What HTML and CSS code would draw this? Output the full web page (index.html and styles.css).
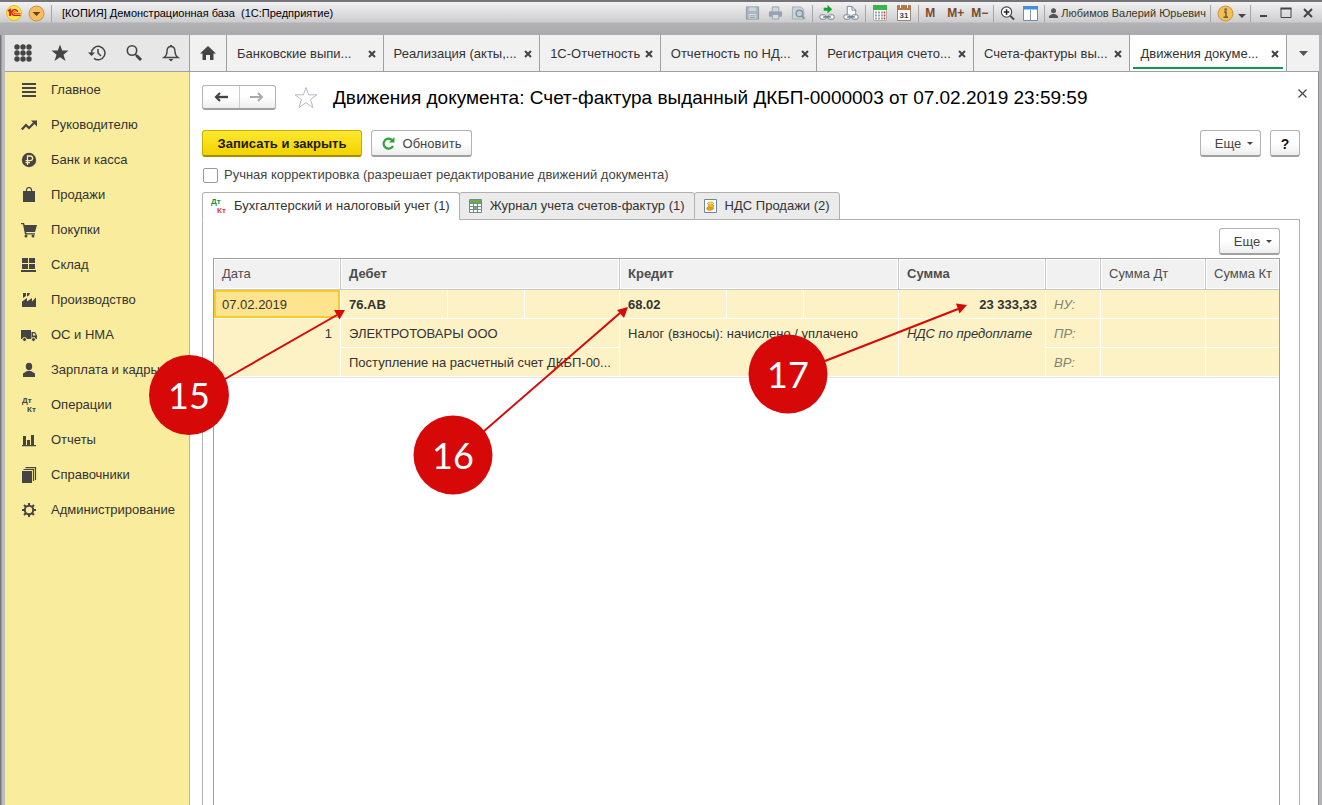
FILE: index.html
```html
<!DOCTYPE html>
<html lang="ru">
<head>
<meta charset="utf-8">
<title>[КОПИЯ] Демонстрационная база (1С:Предприятие)</title>
<link rel="stylesheet" href="styles.css">
</head>
<body>
<div class="window">
  <header class="titlebar">
    <svg class="logo" width="16" height="16" viewBox="0 0 16 16"><circle cx="8" cy="8" r="7.500" fill="#fbe645" stroke="#e3bd2c"/><path d="M2 6l2-1.200V11" fill="none" stroke="#e0101c" stroke-width="1.800"/><path d="M11.500 7A2.900 2.900 0 1 0 8.800 10.400H14.500" fill="none" stroke="#e0101c" stroke-width="1.400"/><path d="M9.800 7.300a1.100 1.100 0 1 0-1 1.400h5.700" fill="none" stroke="#e0101c" stroke-width=".8"/></svg>
    <button class="tbtn" aria-label="Меню"><svg width="17" height="17" viewBox="0 0 17 17"><circle cx="8.500" cy="8.500" r="7.500" fill="#f8bd62" stroke="#c98f3c"/><path d="M4.500 7h8L8.500 11z" fill="#604722"/></svg></button>
    <i class="sep"></i>
    <h1 class="app-title">[КОПИЯ] Демонстрационная база &nbsp;(1С:Предприятие)</h1>
    <div class="tools">
      <button class="tbtn" aria-label="Сохранить"><svg width="15" height="16" viewBox="0 0 16 16"><path d="M1.500 1.500h13v13h-13z" fill="#a9b4be" stroke="#8f9ba6"/><path d="M4 2h8v4H4z" fill="#ccd3d8"/><path d="M4 9h8v5H4z" fill="#d6dce0"/><path d="M5 11h6M5 13h6" stroke="#8f9ba6"/></svg></button>
      <button class="tbtn" aria-label="Печать"><svg width="15" height="16" viewBox="0 0 16 16"><path d="M4.500 6V1.500h7V6" fill="#d2d8dc" stroke="#94a0ab"/><rect x="1" y="6" width="14" height="6" rx="1" fill="#96a2ad"/><path d="M4.500 9.500h7v5h-7z" fill="#d6dce0" stroke="#94a0ab"/></svg></button>
      <button class="tbtn" aria-label="Просмотр"><svg width="15" height="16" viewBox="0 0 16 16"><path d="M1.500 1.500h9l3 3v10h-12z" fill="#cdd3d8" stroke="#a0abb4"/><circle cx="9" cy="8.500" r="3.500" fill="#c3d0d9" stroke="#8796a3" stroke-width="1.600"/><path d="M11.500 11l3 3" stroke="#8796a3" stroke-width="2"/></svg></button>
      <i class="sep"></i>
      <button class="tbtn" aria-label="Перейти по ссылке"><svg width="16" height="16" viewBox="0 0 17 17"><path d="M5 3h4V0l5 4.500L9 9V6H5z" fill="#14a52b"/><rect x="1" y="10.500" width="6.500" height="4.500" rx="1.500" fill="#fff" stroke="#66798a"/><rect x="9.500" y="10.500" width="6.500" height="4.500" rx="1.500" fill="#fff" stroke="#66798a"/><path d="M4.500 12.700h8" stroke="#66798a" stroke-width="1.600"/></svg></button>
      <button class="tbtn" aria-label="Получить ссылку"><svg width="16" height="16" viewBox="0 0 17 17"><path d="M4.500 10V1.500h5l4 4V10" fill="#fff" stroke="#71818f"/><path d="M9.500 1.500v4h4" fill="none" stroke="#71818f"/><rect x="1" y="10.500" width="6.500" height="4.500" rx="1.500" fill="#fff" stroke="#66798a"/><rect x="9.500" y="10.500" width="6.500" height="4.500" rx="1.500" fill="#fff" stroke="#66798a"/><path d="M4.500 12.700h8" stroke="#66798a" stroke-width="1.600"/></svg></button>
      <i class="sep"></i>
      <button class="tbtn wide" aria-label="Калькулятор"><svg width="14" height="16" viewBox="0 0 14 16"><path d="M.5.5h13v15H.5z" fill="#fff" stroke="#a9b5ab"/><path d="M0 0h14v5H0z" fill="#39b54a"/><path d="M2 7.500h8M2 10.500h8M2 13.500h8" stroke="#9aa4ab" stroke-width="2" stroke-dasharray="2 1"/><path d="M11.500 6.500v8" stroke="#e5382a" stroke-width="1.600" stroke-dasharray="2 1"/></svg></button>
      <button class="tbtn wide" aria-label="Календарь"><svg width="14" height="16" viewBox="0 0 14 16"><path d="M.5.500h13v15H.5z" fill="#fff" stroke="#9c826d"/><path d="M0 1h14v4H0z" fill="#bd7444"/><path d="M3.500 0v3M10.500 0v3" stroke="#fff"/><text x="7" y="13" text-anchor="middle" class="cal-day">31</text></svg></button>
      <i class="sep"></i>
      <button class="tbtn mem">M</button>
      <button class="tbtn mem">M+</button>
      <button class="tbtn mem">M−</button>
      <i class="sep"></i>
      <button class="tbtn" aria-label="Масштаб"><svg width="15" height="16" viewBox="0 0 16 16"><circle cx="7" cy="7" r="5.500" fill="#fff" stroke="#444" stroke-width="1.200"/><path d="M4 7h6M7 4v6" stroke="#222" stroke-width="1.600"/><path d="M11 11l4 4" stroke="#444" stroke-width="2"/></svg></button>
      <button class="tbtn" aria-label="Панели"><svg width="15" height="15" viewBox="0 0 15 15"><path d="M.5.500h14v14H.5z" fill="#fff" stroke="#6e8daa"/><path d="M0 0h15v3.500H0z" fill="#3d91dc"/><path d="M7.500 4v11" stroke="#8095a8"/></svg></button>
      <i class="sep"></i>
      <button class="tbtn user"><svg width="9" height="10" viewBox="0 0 9 10"><circle cx="4.500" cy="2.700" r="2.500" fill="#555"/><path d="M0 10V8l3-2h3l3 2v2z" fill="#555"/></svg>Любимов Валерий Юрьевич</button>
      <i class="sep"></i>
      <button class="tbtn" aria-label="О программе"><svg width="17" height="17" viewBox="0 0 17 17"><circle cx="8.500" cy="8.500" r="7.500" fill="#f5bf55" stroke="#c69344"/><path d="M7 7h2v5M6.500 12.300h4.500" fill="none" stroke="#6b5d48" stroke-width="1.500"/><circle cx="8.700" cy="4.500" r="1.300" fill="#6b5d48"/></svg></button>
      <button class="tbtn low" aria-label="Ещё"><svg width="8" height="4" viewBox="0 0 8 4"><path d="M0 0h8L4 4z" fill="#444"/></svg></button>
      <i class="sep"></i>
      <button class="tbtn win" aria-label="Свернуть"><svg width="12" height="12" viewBox="0 0 12 12"><path d="M2 9h7" stroke="#444" stroke-width="2"/></svg></button>
      <button class="tbtn win" aria-label="Развернуть"><svg width="12" height="12" viewBox="0 0 12 12"><path d="M1 1.500h10v9H1z" fill="none" stroke="#444"/><path d="M.5 1.500h11" stroke="#444" stroke-width="2"/></svg></button>
      <button class="tbtn win" aria-label="Закрыть окно"><svg width="12" height="12" viewBox="0 0 12 12"><path d="M2 2l8 8M10 2l-8 8" stroke="#444" stroke-width="2"/></svg></button>
    </div>
  </header>

  <div class="tabbar">
    <div class="quick">
      <button class="qbtn" aria-label="Меню функций"><svg width="18" height="18" viewBox="0 0 18 18" fill="#444"><circle cx="3" cy="3" r="2.700"/><circle cx="9" cy="3" r="2.700"/><circle cx="15" cy="3" r="2.700"/><circle cx="3" cy="9" r="2.700"/><circle cx="9" cy="9" r="2.700"/><circle cx="15" cy="9" r="2.700"/><circle cx="3" cy="15" r="2.700"/><circle cx="9" cy="15" r="2.700"/><circle cx="15" cy="15" r="2.700"/></svg></button>
      <button class="qbtn" aria-label="Избранное"><svg width="18" height="18" viewBox="0 0 18 18"><path d="M9 .5l2.200 6h6.300l-5 4.200 2 6.300L9 13.200 3.500 17l2-6.300-5-4.200h6.300z" fill="#444"/></svg></button>
      <button class="qbtn" aria-label="История"><svg width="18" height="18" viewBox="0 0 18 18" fill="none" stroke="#444" stroke-width="1.500"><path d="M3.500 9a6.700 6.700 0 1 1 2.500 5.300"/><path d="M10 5v4l3 3"/><path d="M0 8.500h7L3.500 12z" fill="#444" stroke="none"/></svg></button>
      <button class="qbtn" aria-label="Поиск"><svg width="18" height="18" viewBox="0 0 18 18" fill="none" stroke="#444"><circle cx="7" cy="6.500" r="4.700" stroke-width="1.600"/><path d="M10 10l2 2" stroke-width="1.600"/><path d="M11.500 11.500l4.500 4.500" stroke-width="3"/></svg></button>
      <button class="qbtn" aria-label="Оповещения"><svg width="18" height="18" viewBox="0 0 18 18"><path d="M9 2.500c-3 0-4 2.500-4 5 0 3-1 4.500-3 6h14c-2-1.500-3-3-3-6 0-2.500-1-5-4-5z" fill="none" stroke="#444" stroke-width="1.400"/><path d="M8 1h2v2H8zM6.500 15h5L9 17.500z" fill="#444"/></svg></button>
    </div>
    <nav class="tabs">
      <a class="home" href="#" aria-label="Начальная страница"><svg width="16" height="14" viewBox="0 0 16 14"><path d="M8 0l8 7.500h-2.500V14H10V9H6v5H2.500V7.500H0z" fill="#444"/></svg></a>
      <div class="tab"><a href="#">Банковские выпи...</a><button class="x" aria-label="Закрыть"><svg width="8" height="8" viewBox="0 0 8 8"><path d="M1 1l6 6M7 1L1 7"/></svg></button></div>
      <div class="tab"><a href="#">Реализация (акты,...</a><button class="x" aria-label="Закрыть"><svg width="8" height="8" viewBox="0 0 8 8"><path d="M1 1l6 6M7 1L1 7"/></svg></button></div>
      <div class="tab short"><a href="#">1С-Отчетность</a><button class="x" aria-label="Закрыть"><svg width="8" height="8" viewBox="0 0 8 8"><path d="M1 1l6 6M7 1L1 7"/></svg></button></div>
      <div class="tab"><a href="#">Отчетность по НД...</a><button class="x" aria-label="Закрыть"><svg width="8" height="8" viewBox="0 0 8 8"><path d="M1 1l6 6M7 1L1 7"/></svg></button></div>
      <div class="tab"><a href="#">Регистрация счето...</a><button class="x" aria-label="Закрыть"><svg width="8" height="8" viewBox="0 0 8 8"><path d="M1 1l6 6M7 1L1 7"/></svg></button></div>
      <div class="tab"><a href="#">Счета-фактуры вы...</a><button class="x" aria-label="Закрыть"><svg width="8" height="8" viewBox="0 0 8 8"><path d="M1 1l6 6M7 1L1 7"/></svg></button></div>
      <div class="tab active"><a href="#">Движения докуме...</a><button class="x" aria-label="Закрыть"><svg width="8" height="8" viewBox="0 0 8 8"><path d="M1 1l6 6M7 1L1 7"/></svg></button></div>
      <button class="more-tabs" aria-label="Все вкладки"><svg width="9" height="5" viewBox="0 0 9 5"><path d="M0 0h9L4.500 5z" fill="#555"/></svg></button>
    </nav>
  </div>

  <div class="body">
    <nav class="side">
      <a href="#"><svg viewBox="0 0 16 16"><path d="M1 2h14M1 6h14M1 10h14M1 14h14" stroke="#444" stroke-width="2"/></svg>Главное</a>
      <a href="#"><svg viewBox="0 0 16 16"><path d="M.8 12.500L5 8l3 3 5-5" fill="none" stroke="#444" stroke-width="2.200"/><path d="M10 3.500h6v6z" fill="#444"/></svg>Руководителю</a>
      <a href="#"><svg viewBox="0 0 16 16"><circle cx="8" cy="8" r="7.200" fill="#444"/><path d="M6.500 13V4h2.800a2.300 2.300 0 0 1 0 4.600H4.500M4.500 10.700H9" fill="none" stroke="#faec9d" stroke-width="1.300"/></svg>Банк и касса</a>
      <a href="#"><svg viewBox="0 0 16 16"><path d="M2 4h3v2h1V4h4v2h1V4h3v11H2z" fill="#444"/><path d="M5.500 6V3a2.500 2.500 0 0 1 5 0v3" fill="none" stroke="#444" stroke-width="1.200"/></svg>Продажи</a>
      <a href="#"><svg viewBox="0 0 16 16"><path d="M0 1h3l.7 2H16l-2 7H5l.5 1.200H14v1.300H4L2 2.300H0z" fill="#444"/><circle cx="5" cy="14" r="1.500" fill="#444"/><circle cx="12" cy="14" r="1.500" fill="#444"/></svg>Покупки</a>
      <a href="#"><svg viewBox="0 0 16 16"><path d="M1 1h6v5H1zM8 1h6v5H8zM1 7h6v5H1zM8 7h6v5H8zM0 13h15v2H0z" fill="#444"/></svg>Склад</a>
      <a href="#"><svg viewBox="0 0 16 16"><path d="M1 15V9.500L6 6v3.500L11 6v3.500L15 5.500V15zM2 1h3v3L2 6zM6 1h3L8 3.500 6 4.500z" fill="#444"/></svg>Производство</a>
      <a href="#"><svg viewBox="0 0 16 16"><path d="M0 3h10v9H0zM10.500 5H14l2 3.500V12h-5.500z" fill="#444"/><path d="M12 6.200h1.500L14.800 8.500H12z" fill="#faec9d"/><circle cx="3.500" cy="12.500" r="2" fill="#444" stroke="#faec9d"/><circle cx="12.500" cy="12.500" r="2" fill="#444" stroke="#faec9d"/></svg>ОС и НМА</a>
      <a href="#"><svg viewBox="0 0 16 16"><ellipse cx="8" cy="4.500" rx="3.200" ry="3.700" fill="#444"/><path d="M2 15v-3.500L6 9h4l4 2.500V15z" fill="#444"/></svg>Зарплата и кадры</a>
      <a href="#"><svg viewBox="0 0 16 16" class="dk"><text x="1" y="6">Дт</text><text x="6" y="15">Кт</text></svg>Операции</a>
      <a href="#"><svg viewBox="0 0 16 16"><path d="M2 4h3v9H2zM6 8h3v5H6zM10 3h3v10h-3zM1 13h14v1.200H1z" fill="#444"/></svg>Отчеты</a>
      <a href="#"><svg viewBox="0 0 16 16"><path d="M1 4h10v12H1z" fill="#444"/><path d="M2.500 2.500h10V14M4.500.700h10V13" fill="none" stroke="#444" stroke-width="1.200"/></svg>Справочники</a>
      <a href="#"><svg viewBox="0 0 16 16" fill="none" stroke="#444"><circle cx="8" cy="8" r="4.200" stroke-width="2"/><path d="M8 1v3M8 12v3M1 8h3M12 8h3M3 3l2 2M11 11l2 2M13 3l-2 2M5 11l-2 2" stroke-width="2"/></svg>Администрирование</a>
    </nav>

    <main class="main">
      <div class="heading">
        <div class="nav-pair">
          <button aria-label="Назад"><svg width="14" height="10" viewBox="0 0 14 10"><path d="M3 5h11" stroke="#444" stroke-width="2.400"/><path d="M6 1L2 5l4 4" fill="none" stroke="#444" stroke-width="2.200"/></svg></button>
          <button aria-label="Вперед"><svg width="14" height="10" viewBox="0 0 14 10"><path d="M0 5h11" stroke="#aaa" stroke-width="2"/><path d="M8 1l4 4-4 4" fill="none" stroke="#aaa" stroke-width="2"/></svg></button>
        </div>
        <button class="fav" aria-label="В избранное"><svg width="24" height="23" viewBox="0 0 24 23"><path d="M12 1.500l2.600 7.300H23l-6.500 4.800 2.500 8-7-5-7 5 2.500-8L1 8.800h8.400z" fill="#fff" stroke="#b5bac4"/></svg></button>
        <h2>Движения документа: Счет-фактура выданный ДКБП-0000003 от 07.02.2019 23:59:59</h2>
        <button class="close" aria-label="Закрыть"><svg width="9" height="9" viewBox="0 0 9 9"><path d="M.5.500l8 8M8.500.500l-8 8" stroke="#444" stroke-width="1.200"/></svg></button>
      </div>

      <div class="actions">
        <button class="btn primary">Записать и закрыть</button>
        <button class="btn refresh"><svg width="13" height="13" viewBox="0 0 13 13"><path d="M10.500 3.500A5 5 0 1 0 11 9" fill="none" stroke="#2ca335" stroke-width="2.200"/><path d="M7 5.500H12.500V0z" fill="#2ca335"/></svg>Обновить</button>
        <button class="btn more push">Еще<i class="caret"></i></button>
        <button class="btn help">?</button>
      </div>

      <label class="check"><input type="checkbox">Ручная корректировка (разрешает редактирование движений документа)</label>

      <div class="subtabs">
        <button class="subtab on"><svg width="17" height="16" viewBox="0 0 17 16" class="dk"><text x="0" y="6" class="g">Дт</text><text x="6" y="15" class="r">Кт</text></svg>Бухгалтерский и налоговый учет (1)</button>
        <button class="subtab"><svg width="13" height="14" viewBox="0 0 13 14"><path d="M.5.500h12v13H.5z" fill="#fff" stroke="#6a879b"/><path d="M1 1h11v3H1z" fill="#6cae45"/><path d="M1 4.500h11M1 7.500h11M1 10.500h11M4.500 3v10M8.500 3v10" stroke="#71899a"/><path d="M5 8h3v2H5z" fill="#67b545"/></svg>Журнал учета счетов-фактур (1)</button>
        <button class="subtab"><svg width="13" height="14" viewBox="0 0 13 14"><path d="M.5.500h12v13H.5z" fill="#fff" stroke="#6a879b"/><ellipse cx="6" cy="9.500" rx="3.500" ry="1.800" fill="#e0a21c" stroke="#bd7f12" stroke-width=".6"/><ellipse cx="7" cy="7" rx="3" ry="1.500" fill="#f2c43a" stroke="#bd7f12" stroke-width=".6"/><ellipse cx="6.500" cy="4.500" rx="3" ry="1.500" fill="#f8d860" stroke="#bd7f12" stroke-width=".6"/></svg>НДС Продажи (2)</button>
      </div>

      <section class="panel">
        <div class="panel-bar"><button class="btn more">Еще<i class="caret"></i></button></div>
        <div class="grid-box">
          <table class="grid">
            <colgroup><col class="c-date"><col class="c-a"><col class="c-b"><col class="c-c"><col class="c-a"><col class="c-b"><col class="c-c"><col class="c-sum"><col class="c-kind"><col class="c-dt"><col class="c-kt"></colgroup>
            <thead>
              <tr><th class="n">Дата</th><th colspan="3">Дебет</th><th colspan="3">Кредит</th><th>Сумма</th><th></th><th class="n">Сумма Дт</th><th class="n">Сумма Кт</th></tr>
            </thead>
            <tbody>
              <tr><td class="sel">07.02.2019</td><td class="b">76.АВ</td><td></td><td></td><td class="b">68.02</td><td></td><td></td><td class="b num">23 333,33</td><td class="kind">НУ:</td><td></td><td></td></tr>
              <tr><td class="num top" rowspan="2">1</td><td colspan="3">ЭЛЕКТРОТОВАРЫ ООО</td><td class="top" colspan="3" rowspan="2">Налог (взносы): начислено / уплачено</td><td class="it top" rowspan="2">НДС по предоплате</td><td class="kind">ПР:</td><td></td><td></td></tr>
              <tr><td colspan="3">Поступление на расчетный счет ДКБП-00...</td><td class="kind">ВР:</td><td></td><td></td></tr>
            </tbody>
          </table>
        </div>
      </section>
    </main>
  </div>

  <svg class="marks" width="1000" height="520" viewBox="0 0 1000 520">
    <path d="M225 379L337 315M483 432L620 313M825 361L958 309" stroke="#d70808" stroke-width="2"/>
    <g fill="#d70808"><path d="M345 310l-11 0 5.500 9.500zM628 307l-11 3 7 8zM967 305l-11-1.500 3.500 10z"/><circle cx="189" cy="395" r="40"/><circle cx="453" cy="455" r="39.500"/><circle cx="788" cy="374" r="39.500"/></g>
    <g class="mark-no"><text x="189" y="409">15</text><text x="453" y="469">16</text><text x="788" y="388">17</text></g>
  </svg>
</div>
</body>
</html>
```
FILE: styles.css
```css
* { box-sizing: border-box; }
body {
  margin: 0;
  font: 13px/16px "Liberation Sans", Arial, sans-serif;
  color: #333;
}
button {
  font: inherit;
  color: inherit;
  padding: 0;
  border: 0;
  background: none;
}
a { color: inherit; text-decoration: none; }
svg { flex: none; display: block; }
.window {
  position: relative;
  display: flex;
  flex-direction: column;
  min-height: 100vh;
  padding: 0 3px 0 5px;
  background: linear-gradient(90deg, #77777b 0, #77777b 1px, #bcbcbe 2px, #b4b4b6 100%);
}

.titlebar {
  display: flex;
  align-items: center;
  height: 35px;
  margin: 0 -3px 0 -5px;
  padding: 0 3px 11px 6px;
  border-top: 2px solid #77737a;
  background: linear-gradient(#f2f2f3, #cdcdcf 20px, #b2b2b4 21px, #aaaaad);
}
.sep { width: 1px; height: 17px; background: #a5a5a8; margin: 0 2px; }
.titlebar .logo { margin-right: 6px; }
.titlebar > .sep { margin: 0 10px 0 6px; }
.app-title { margin: 0; font-size: 11px; font-weight: 400; color: #000; white-space: nowrap; }
.tools { display: flex; align-items: center; margin-left: auto; }
.tbtn { display: flex; align-items: center; }
.tools .tbtn { margin: 0 4px; }
.tools .wide { margin: 0 5px; }
.tools .mem { min-width: 15px; margin: 0 3px 0 4px; font-weight: 700; color: #7d4a28; font-size: 12px; }
.tools .user { gap: 3px; margin: 0 2px; font-size: 11px; color: #3f3520; }
.tools .low { padding-top: 6px; margin: 0 2px 0 0; }
.tools .win { margin: 0 5px; }
.cal-day { font: 700 8px "Liberation Sans", sans-serif; fill: #444; }

.tabbar { display: flex; height: 37px; border-bottom: 1px solid #a0a0a0; background: #f1f1f1; }
.quick {
  flex: none;
  display: flex;
  justify-content: space-between;
  align-items: center;
  width: 185px;
  padding: 0 9px;
  background: #e7e7e7;
  border-right: 1px solid #a0a0a0;
}
.tabs { flex: 1; display: flex; min-width: 0; }
.home { flex: none; display: flex; align-items: center; justify-content: center; width: 37px; border-right: 1px solid #a0a0a0; }
.tab {
  position: relative;
  flex: 1 1 157px;
  min-width: 0;
  display: flex;
  align-items: center;
  justify-content: space-between;
  padding: 1px 7px 0 10px;
  border-right: 1px solid #a0a0a0;
  white-space: nowrap;
}
.tab.short { flex-basis: 121px; }
.tab.active { background: #fff; }
.tab.active::after { content: ""; position: absolute; left: 3px; right: 3px; bottom: 2px; height: 2px; background: #0c9a50; }
.x path { stroke: #444; stroke-width: 2; }
.more-tabs { flex: none; display: flex; align-items: center; justify-content: center; width: 32px; }

.body { flex: 1; display: flex; }
.side {
  flex: none;
  width: 185px;
  background: #faec9d;
  border-right: 1px solid #bdb681;
}
.side a { display: flex; align-items: center; gap: 14px; height: 35px; padding-left: 16px; white-space: nowrap; }
.side svg { width: 16px; height: 16px; }
.dk { overflow: visible; }
.dk text { font: 700 8px "Liberation Sans", sans-serif; fill: #444; }
.dk .g { fill: #14924b; }
.dk .r { fill: #dc3838; }

.main { flex: 1; min-width: 0; display: flex; flex-direction: column; padding: 12px 18px 0 12px; background: #fff; border-right: 1px solid #8f8f93; }
.heading { display: flex; align-items: center; height: 26px; }
.nav-pair, .btn {
  border: 1px solid #b3b3b3;
  border-bottom: 2px solid #a0a0a0;
  border-radius: 3px;
  background: linear-gradient(#fff 50%, #eee);
}
.nav-pair { display: flex; width: 74px; height: 25px; }
.nav-pair button { flex: 1; display: flex; align-items: center; justify-content: center; }
.nav-pair button + button { border-left: 1px solid #ccc; }
.fav { margin: 0 15px 0 18px; }
h2 { margin: 0; padding-top: 2px; font-size: 19px; line-height: 24px; font-weight: 400; color: #000; white-space: nowrap; }
.close { margin: -8px -7px 0 auto; }
.actions { display: flex; gap: 9px; margin-top: 20px; }
.btn { display: flex; align-items: center; justify-content: center; height: 27px; padding-top: 1px; color: #444; }
.primary {
  width: 160px;
  font-weight: 700;
  color: #1c1c00;
  border-color: #c9ac08;
  border-bottom-color: #a88d00;
  background: linear-gradient(#ffe92e, #f2d200);
}
.refresh { width: 101px; gap: 8px; }
.more { width: 61px; gap: 6px; padding-left: 7px; }
.push { margin-left: auto; }
.caret { border: 3px solid transparent; border-top-color: #444; border-bottom: 0; }
.help { width: 30px; font-weight: 700; color: #111; font-size: 14px; }
.check { display: flex; align-items: center; gap: 6px; height: 16px; margin-top: 10px; color: #444; }
.check input { appearance: none; margin: 0 0 0 1px; width: 15px; height: 15px; border: 1px solid #999; border-radius: 2px; background: #fff; }

.subtabs { display: flex; margin-top: 9px; position: relative; z-index: 1; }
.subtab {
  display: flex;
  align-items: center;
  gap: 8px;
  height: 28px;
  padding: 0 9px;
  margin-left: -1px;
  border: 1px solid #b0b0b0;
  border-radius: 3px 3px 0 0;
  background: #ebebeb;
  white-space: nowrap;
}
.subtab.on { margin-left: 0; gap: 6px; padding-left: 8px; background: #fff; border-bottom-color: #fff; }
.panel {
  flex: 1;
  display: flex;
  flex-direction: column;
  margin-top: -1px;
  padding: 8px 19px 0 10px;
  border: 1px solid #b0b0b0;
  border-bottom: 0;
}
.panel-bar { display: flex; justify-content: flex-end; padding-bottom: 3px; }
.grid-box { flex: 1; border: 1px solid #a0a0a0; border-bottom: 0; }
.grid { width: 100%; table-layout: fixed; border-collapse: separate; border-spacing: 0; border-bottom: 1px solid #e4e4e4; }
.c-date { width: 127px; }
.c-a { width: 107px; }
.c-b { width: 77px; }
.c-c { width: 95px; }
.c-sum { width: 147px; }
.c-kind { width: 55px; }
.c-dt { width: 105px; }
.c-kt { width: 73px; }
.grid th {
  height: 31px;
  padding: 0 0 0 8px;
  text-align: left;
  color: #4d4d4d;
  background: #f1f1f1;
  border-right: 1px solid #c9c9c9;
  border-bottom: 1px solid #c9c9c9;
  box-shadow: inset 0 0 0 1px #fff;
  white-space: nowrap;
}
.grid th:last-child { border-right: 0; }
.grid .n { font-weight: 400; }
.grid td {
  height: 29px;
  padding: 1px 0 0 8px;
  background: #fdf1c6;
  border-right: 1px solid #fff;
  border-bottom: 1px solid #fff;
  white-space: nowrap;
  overflow: hidden;
}
.grid td:last-child { border-right: 0; }
.grid .top { vertical-align: top; padding-top: 7px; }
.grid .num { text-align: right; padding-right: 8px; }
.grid .b { font-weight: 700; }
.grid .it { font-style: italic; }
.grid .kind { font-style: italic; color: #85826f; }
.grid .sel { background: #fee48e; box-shadow: inset 0 0 0 2px #fbca25; }

.marks { position: absolute; left: 0; top: 0; pointer-events: none; }
.mark-no text { font: 36px Lato, sans-serif; fill: #fff; text-anchor: middle; }
```
